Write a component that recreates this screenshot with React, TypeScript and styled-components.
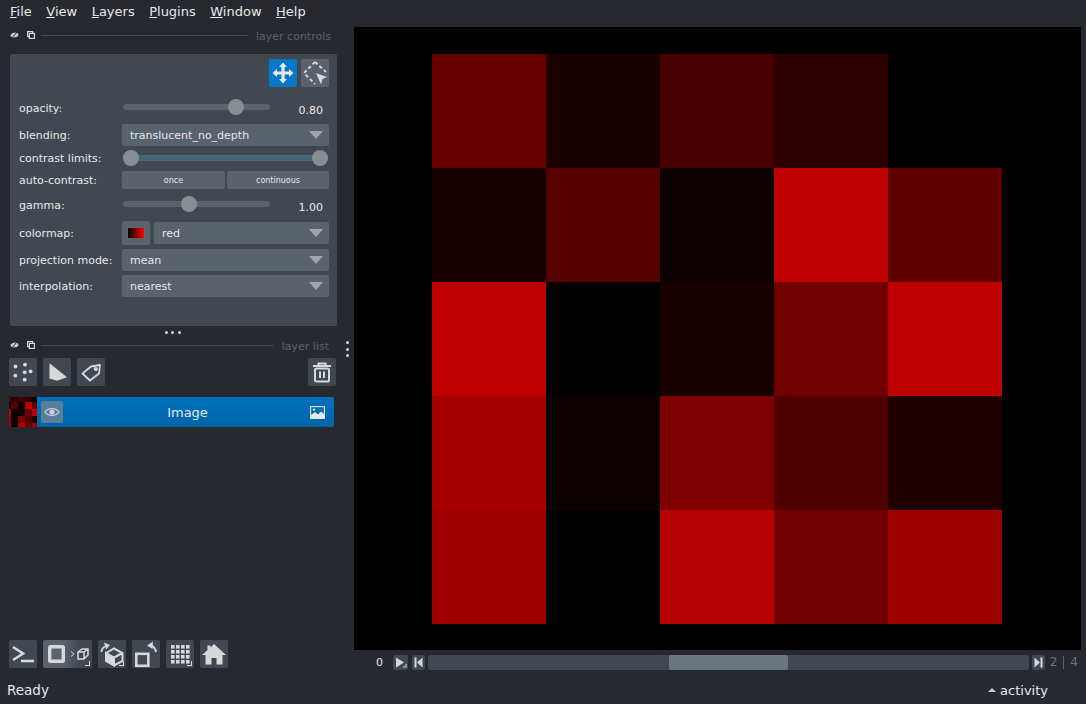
import styled, { createGlobalStyle } from 'styled-components';
import type { ReactNode } from 'react';

const GlobalStyle = createGlobalStyle`
  html, body {
    margin: 0;
    height: 100%;
    background: #262930;
    overflow: hidden;
  }
  #root { height: 100%; }
`;

const Window = styled.div`
  width: 1086px;
  height: 704px;
  display: flex;
  flex-direction: column;
  background: #262930;
  color: #f0f1f2;
  font-family: 'DejaVu Sans', sans-serif;
`;

const MenuBar = styled.div`
  height: 27px;
  flex: none;
  display: flex;
  gap: 14.5px;
  align-items: center;
  padding: 0 0 4px 10px;
  box-sizing: border-box;
  font-size: 13px;
`;

const MenuItem = styled.span`
  color: #e6e8ea;
`;

const Main = styled.div`
  flex: 1;
  display: flex;
  min-height: 0;
`;

const Dock = styled.div`
  width: 354px;
  flex: none;
  display: flex;
  flex-direction: column;
`;

const TitleBar = styled.div<{ $h: number; $pb: number }>`
  height: ${({ $h }) => $h}px;
  display: flex;
  align-items: center;
  gap: 8px;
  padding: 0 0 ${({ $pb }) => $pb}px 10px;
  box-sizing: border-box;
`;

const TitleIcons = styled.div`
  width: 26px;
  display: flex;
  gap: 8px;
  margin-right: -3px;
`;

const TitleLine = styled.div`
  flex: 1;
  height: 1px;
  background: #414851;
`;

const TitleText = styled.span`
  font-size: 11px;
  color: #5a626c;
  padding-top: 2px;
`;

const TitleSpacer = styled.div`
  width: 15px;
  flex: none;
`;

const Panel = styled.div`
  width: 327px;
  height: 272px;
  margin-left: 10px;
  padding: 5px 8px 0 9px;
  box-sizing: border-box;
  background: #414851;
  border-radius: 2px;
  flex: none;
`;

const ModeRow = styled.div`
  display: flex;
  justify-content: flex-end;
  gap: 4px;
  height: 28px;
  margin-bottom: 8px;
`;

const ToolButton = styled.div<{ $active?: boolean }>`
  width: 28px;
  height: 28px;
  flex: none;
  border-radius: 2px;
  display: flex;
  align-items: center;
  justify-content: center;
  background: ${({ $active }) => ($active ? '#0479c8' : '#5a626c')};
`;

const Row = styled.div<{ $h: number; $mt?: number }>`
  height: ${({ $h }) => $h}px;
  margin-top: ${({ $mt }) => $mt ?? 0}px;
  display: grid;
  grid-template-columns: 103px 1fr;
  align-items: center;
`;

const Label = styled.label`
  font-size: 11px;
  color: #e6e8ea;
  white-space: nowrap;
`;

const SliderCell = styled.div`
  display: flex;
  align-items: center;
  height: 100%;
`;

const Track = styled.div`
  position: relative;
  width: 147px;
  height: 6px;
  margin: 0 0 2px 1px;
  border-radius: 3px;
  background: #5a626c;
`;

const Knob = styled.div`
  position: absolute;
  top: -5px;
  width: 16px;
  height: 16px;
  margin-left: -8px;
  border-radius: 50%;
  background: #868e93;
`;

const Value = styled.span`
  width: 53px;
  text-align: right;
  font-size: 11px;
  color: #e6e8ea;
  padding-top: 5px;
`;

const RangeTrack = styled.div`
  position: relative;
  flex: 1;
  height: 6px;
  margin: 0 1px;
  border-radius: 3px;
  background: #41677c;
  border: 1px solid #5a626c;
  box-sizing: border-box;
`;

const RangeKnob = styled(Knob)`
  top: -6px;
`;

const Combo = styled.div`
  flex: 1;
  height: 22px;
  display: flex;
  align-items: center;
  justify-content: space-between;
  padding: 0 6px 0 8px;
  box-sizing: border-box;
  background: #5a626c;
  border-radius: 2px;
  font-size: 11px;
  color: #e6e8ea;
`;

const Caret = styled.div`
  width: 0;
  height: 0;
  border-left: 7px solid transparent;
  border-right: 7px solid transparent;
  border-top: 8px solid #a0a5aa;
`;

const ButtonPair = styled.div`
  display: grid;
  grid-template-columns: 103px 102px;
  gap: 2px;
`;

const SmallButton = styled.div`
  height: 18px;
  display: flex;
  align-items: center;
  justify-content: center;
  background: #5a626c;
  border-radius: 2px;
  font-size: 8px;
  color: #e6e8ea;
`;

const ColormapCell = styled.div`
  display: flex;
  align-items: center;
  gap: 4px;
`;

const Swatch = styled.div`
  width: 28px;
  height: 24px;
  flex: none;
  display: flex;
  align-items: center;
  justify-content: center;
  background: #5a626c;
  border-radius: 2px;
`;

const SwatchBar = styled.div`
  width: 16px;
  height: 10px;
  background: linear-gradient(to right, #000, #f00);
`;

const Handle = styled.div`
  width: 325px;
  height: 12px;
  margin-left: 10px;
  flex: none;
  display: flex;
  align-items: center;
  justify-content: center;
  gap: 3.5px;
`;

const Dot = styled.span`
  width: 3px;
  height: 3px;
  border-radius: 50%;
  background: #d6d8da;
`;

const DotColumn = styled.div`
  display: flex;
  flex-direction: column;
  gap: 3.5px;
  margin: 8px 5px 0 9px;
`;

const LayerTools = styled.div`
  display: flex;
  gap: 6px;
  padding: 0 18px 0 9px;
  margin-top: 6px;
`;

const Push = styled.div`
  flex: 1;
`;

const DarkButton = styled(ToolButton)`
  background: #414851;
`;

const LayerRow = styled.div`
  display: flex;
  width: 325px;
  height: 30px;
  margin: 11px 0 0 9px;
`;

const Thumb = styled.div`
  width: 28px;
  height: 30px;
  flex: none;
  display: grid;
  grid-template-columns: 2px 7px 7px 7px 5px;
  grid-template-rows: 5px 7px 7px 7px 4px;
  background: #000;
`;

const ThumbCell = styled.div<{ $c: string }>`
  background: ${({ $c }) => $c};
`;

const LayerBody = styled.div`
  flex: 1;
  display: flex;
  align-items: center;
  padding: 0 9px 0 4px;
  background: linear-gradient(to bottom, #0072bf, #0064a6);
  border-radius: 0 2px 2px 0;
`;

const EyeBox = styled.div`
  width: 22px;
  height: 22px;
  flex: none;
  display: flex;
  align-items: center;
  justify-content: center;
  background: #5a7d9a;
  border-radius: 2px;
`;

const LayerName = styled.span`
  flex: 1;
  text-align: center;
  font-size: 13px;
  color: #e6e8ea;
  padding-left: 2px;
`;

const BottomTools = styled.div`
  margin-top: auto;
  padding: 0 0 10px 9px;
  display: flex;
  gap: 6px;
`;

const NdButton = styled.div`
  position: relative;
  width: 49px;
  height: 28px;
  flex: none;
  border-radius: 2px;
  background: linear-gradient(to right, #5a626c 40%, #414851 75%);
`;

const ToolWrap = styled.div`
  position: relative;
`;

const CornerMark = styled.div`
  position: absolute;
  right: 2px;
  bottom: 2px;
  width: 4px;
  height: 4px;
  border-right: 1px solid #d6d8da;
  border-bottom: 1px solid #d6d8da;
`;

const ViewerColumn = styled.div`
  flex: 1;
  display: flex;
  flex-direction: column;
  padding-right: 5px;
`;

const Canvas = styled.div`
  height: 623px;
  flex: none;
  background: #000;
  padding: 27px 79px 0 78px;
  box-sizing: border-box;
`;

const Heatmap = styled.div`
  width: 570px;
  height: 570px;
  display: grid;
  grid-template-columns: repeat(5, 1fr);
  grid-template-rows: repeat(5, 1fr);
`;

const Cell = styled.div<{ $c: string }>`
  background: ${({ $c }) => $c};
`;

const Dims = styled.div`
  height: 16px;
  margin-top: 4px;
  display: flex;
  align-items: center;
  font-size: 11px;
`;

const FrameNumber = styled.span`
  width: 39px;
  text-align: right;
  padding-right: 10px;
  box-sizing: border-box;
  color: #e6e8ea;
  flex: none;
`;

const PlayButton = styled.div<{ $w: number; $ml?: number }>`
  position: relative;
  width: ${({ $w }) => $w}px;
  height: 15px;
  flex: none;
  margin-left: ${({ $ml }) => $ml ?? 0}px;
  display: flex;
  align-items: center;
  justify-content: center;
  background: #414851;
  border-radius: 2px;
`;

const ScrollTrack = styled.div`
  flex: 1;
  height: 15px;
  margin: 0 3px;
  display: flex;
  background: #414851;
  border-radius: 2px;
`;

const ScrollSpace = styled.div<{ $w: number }>`
  width: ${({ $w }) => $w}px;
`;

const ScrollThumb = styled.div`
  width: 119px;
  background: #6a7682;
  border-radius: 2px;
`;

const DimCounts = styled.div`
  width: 36px;
  flex: none;
  display: flex;
  align-items: center;
  justify-content: flex-end;
  padding-right: 3px;
  box-sizing: border-box;
  color: #6a737d;
  font-size: 12px;
  gap: 6px;
`;

const CountRule = styled.span`
  width: 1px;
  height: 13px;
  background: #5a626c;
`;

const StatusBar = styled.div`
  height: 26px;
  flex: none;
  display: flex;
  align-items: center;
  justify-content: space-between;
  padding: 0 38px 2px 7px;
  box-sizing: border-box;
  font-size: 13.5px;
  color: #e6e8ea;
`;

const Activity = styled.div`
  display: flex;
  align-items: center;
  gap: 4px;
  font-size: 13px;
`;

const ActivityCaret = styled.div`
  width: 0;
  height: 0;
  border-left: 4px solid transparent;
  border-right: 4px solid transparent;
  border-bottom: 4px solid #c4c8cc;
`;

const ICON = '#d6d8da';

const FloatIcon = () => (
  <svg width="9" height="8" viewBox="0 0 9 8">
    <ellipse cx="4.5" cy="4" rx="4" ry="2.4" fill="#c8cacc" transform="rotate(-12 4.5 4)" />
    <path d="M2 7 L7 1" stroke="#262930" strokeWidth="1" />
  </svg>
);

const CloseIcon = () => (
  <svg width="8" height="8" viewBox="0 0 8 8" fill="none" stroke="#d6d8da" strokeWidth="1.2">
    <rect x="0.6" y="0.6" width="5" height="5" />
    <rect x="2.4" y="2.4" width="5" height="5" fill="#262930" />
  </svg>
);

const Title = ({ label, h, pb, children }: { label: string; h: number; pb: number; children?: ReactNode }) => (
  <TitleBar $h={h} $pb={pb}>
    <TitleIcons>
      <FloatIcon />
      <CloseIcon />
    </TitleIcons>
    <TitleLine />
    <TitleText>{label}</TitleText>
    {children}
  </TitleBar>
);

const MoveIcon = () => (
  <svg width="22" height="22" viewBox="0 0 22 22" fill="#e6e8ea">
    <path d="M11 0.5 L15 5 H12.6 V9.4 H17 V7 L21.5 11 L17 15 V12.6 H12.6 V17 H15 L11 21.5 L7 17 H9.4 V12.6 H5 V15 L0.5 11 L5 7 V9.4 H9.4 V5 H7 Z" />
  </svg>
);

const SelectIcon = () => (
  <svg width="26" height="26" viewBox="0 0 26 26">
    <path d="M13 2 L24 12 M13 2 L2 13 L13 24" fill="none" stroke="#d6d8da" strokeWidth="2" strokeDasharray="3.4 2.6" />
    <path d="M14 13 L25 17 L20.5 19 L19 24.5 Z" fill="#d6d8da" />
  </svg>
);

const PointsIcon = () => (
  <svg width="28" height="28" viewBox="0 0 28 28" fill={ICON}>
    <circle cx="16" cy="6.7" r="1.9" />
    <circle cx="6.5" cy="8.5" r="1.9" />
    <circle cx="21.6" cy="13.3" r="1.9" />
    <circle cx="15.7" cy="14.3" r="1.9" />
    <circle cx="6.3" cy="17.7" r="1.9" />
    <circle cx="15.7" cy="21.7" r="1.9" />
  </svg>
);

const ShapeIcon = () => (
  <svg width="28" height="28" viewBox="0 0 28 28" fill={ICON}>
    <path d="M6.5 5.3 L24 19.3 L14 22.8 L6.5 20.5 Z" />
  </svg>
);

const LabelIcon = () => (
  <svg width="28" height="28" viewBox="0 0 28 28" fill="none" stroke={ICON} strokeWidth="1.8" strokeLinejoin="round">
    <path d="M5.5 15.5 L14 8.5 L23 7 L22 15.5 L13 22.5 Z" />
    <circle cx="18.8" cy="11" r="1.2" />
  </svg>
);

const TrashIcon = () => (
  <svg width="28" height="28" viewBox="0 0 28 28" fill="none" stroke={ICON} strokeWidth="2">
    <path d="M5 8 H23 M10.5 8 V5.5 H17.5 V8" />
    <rect x="7" y="10.5" width="14" height="13" rx="1.5" />
    <path d="M12 13.5 V20 M16 13.5 V20" />
  </svg>
);

const EyeIcon = () => (
  <svg width="16" height="12" viewBox="0 0 16 12">
    <path d="M1 6 C4 1.5 12 1.5 15 6 C12 10.5 4 10.5 1 6 Z" fill="none" stroke="#c8d2da" strokeWidth="1.2" />
    <circle cx="8" cy="6" r="2.6" fill="#c8d2da" />
  </svg>
);

const ImageIcon = () => (
  <svg width="15" height="13" viewBox="0 0 15 13">
    <rect x="0.6" y="0.6" width="13.8" height="11.8" fill="none" stroke="#e6e8ea" strokeWidth="1.1" />
    <path d="M1 12 V9 L5 6 L8 8.5 L11 5.5 L14 8 V12 Z" fill="#e6e8ea" />
    <circle cx="4" cy="3.6" r="1.2" fill="#e6e8ea" />
  </svg>
);

const ConsoleIcon = () => (
  <svg width="28" height="28" viewBox="0 0 28 28" fill="none" stroke={ICON} strokeWidth="2.6">
    <path d="M4 7 L14 13.5 L4 20" />
    <path d="M12 21 H25" />
  </svg>
);

const NdIcon = () => (
  <svg width="49" height="28" viewBox="0 0 49 28" fill="none" stroke={ICON}>
    <rect x="6.7" y="6.7" width="13.6" height="14.6" rx="1" strokeWidth="3.4" />
    <path d="M28 11.5 L31 14 L28 16.5" strokeWidth="1" />
    <path d="M35 12 L39 9 H45 V15 L41 19 H35 Z M35 12 H41 V19 M41 12 L45 9" strokeWidth="1.5" />
  </svg>
);

const RollIcon = () => (
  <svg width="28" height="28" viewBox="0 0 28 28" fill="none" stroke={ICON} strokeWidth="2">
    <path d="M8 13 L16 17.5 V25.5 L8 21 Z" fill={ICON} />
    <path d="M8 13 L16 8.5 L24.5 13 V21 L16 25.5 M16 17.5 L24.5 13" />
    <path d="M3.5 12 C3.5 9.5 5 7.5 7 6.5" strokeWidth="1.8" />
    <path d="M6 2.5 L12 5 L8 9.5 Z" fill={ICON} stroke="none" />
  </svg>
);

const TransposeIcon = () => (
  <svg width="28" height="28" viewBox="0 0 28 28" fill="none" stroke={ICON}>
    <rect x="4.3" y="13.8" width="12" height="12" strokeWidth="2.6" />
    <path d="M19 5 C21.5 6.5 23.5 9 24 12" strokeWidth="2" />
    <path d="M15 5.5 L21 1.5 L20.5 9 Z" fill={ICON} stroke="none" />
  </svg>
);

const GridIcon = () => (
  <svg width="28" height="28" viewBox="0 0 28 28" fill={ICON}>
    {[5, 10, 15, 20].map((y) =>
      [5, 10, 15, 20].map((x) => <rect key={`${x}-${y}`} x={x} y={y} width="3.6" height="3.6" />),
    )}
  </svg>
);

const HomeIcon = () => (
  <svg width="28" height="28" viewBox="0 0 28 28" fill={ICON}>
    <path d="M14 4 L26 15 H22.5 V24.5 H16.5 V18 H11.5 V24.5 H5.5 V15 H2 L7.5 10 V5.5 H10.5 V7.4 Z" />
  </svg>
);

const PlayIcon = () => (
  <svg width="12" height="11" viewBox="0 0 12 11" fill={ICON}>
    <path d="M1 0.5 L9 5.5 L1 10.5 Z" />
    <path d="M11.5 7 V10.5 H8 V9.5 H10.5 V7 Z" />
  </svg>
);

const StepBack = () => (
  <svg width="9" height="11" viewBox="0 0 9 11" fill={ICON}>
    <rect x="0.5" y="0.5" width="2" height="10" />
    <path d="M8.5 0.5 L3 5.5 L8.5 10.5 Z" />
  </svg>
);

const StepForward = () => (
  <svg width="9" height="11" viewBox="0 0 9 11" fill={ICON}>
    <rect x="6.5" y="0.5" width="2" height="10" />
    <path d="M0.5 0.5 L6 5.5 L0.5 10.5 Z" />
  </svg>
);

const shade = (v: number) => `rgb(${v}, 0, 0)`;

const GRID = [
  [104, 28, 72, 44, 0],
  [26, 88, 12, 192, 96],
  [192, 4, 24, 112, 192],
  [168, 12, 128, 80, 32],
  [156, 0, 180, 112, 156],
];

const MENU = [
  ['F', 'ile'],
  ['V', 'iew'],
  ['L', 'ayers'],
  ['P', 'lugins'],
  ['W', 'indow'],
  ['H', 'elp'],
];

export default function App() {
  return (
    <Window>
      <GlobalStyle />
      <MenuBar>
        {MENU.map(([first, rest]) => (
          <MenuItem key={first}>
            <u>{first}</u>
            {rest}
          </MenuItem>
        ))}
      </MenuBar>
      <Main>
        <Dock>
          <Title label="layer controls" h={27} pb={11}>
            <TitleSpacer />
          </Title>
          <Panel>
            <ModeRow>
              <ToolButton $active>
                <MoveIcon />
              </ToolButton>
              <ToolButton>
                <SelectIcon />
              </ToolButton>
            </ModeRow>
            <Row $h={26}>
              <Label>opacity:</Label>
              <SliderCell>
                <Track>
                  <Knob style={{ left: '77%' }} />
                </Track>
                <Value>0.80</Value>
              </SliderCell>
            </Row>
            <Row $h={22} $mt={3}>
              <Label>blending:</Label>
              <Combo>
                translucent_no_depth
                <Caret />
              </Combo>
            </Row>
            <Row $h={22} $mt={1}>
              <Label>contrast limits:</Label>
              <SliderCell>
                <RangeTrack>
                  <RangeKnob style={{ left: 7 }} />
                  <RangeKnob style={{ left: 196 }} />
                </RangeTrack>
              </SliderCell>
            </Row>
            <Row $h={18} $mt={2}>
              <Label>auto-contrast:</Label>
              <ButtonPair>
                <SmallButton>once</SmallButton>
                <SmallButton>continuous</SmallButton>
              </ButtonPair>
            </Row>
            <Row $h={28} $mt={2}>
              <Label>gamma:</Label>
              <SliderCell>
                <Track>
                  <Knob style={{ left: '45%' }} />
                </Track>
                <Value>1.00</Value>
              </SliderCell>
            </Row>
            <Row $h={24} $mt={2}>
              <Label>colormap:</Label>
              <ColormapCell>
                <Swatch>
                  <SwatchBar />
                </Swatch>
                <Combo>
                  red
                  <Caret />
                </Combo>
              </ColormapCell>
            </Row>
            <Row $h={22} $mt={4}>
              <Label>projection mode:</Label>
              <Combo>
                mean
                <Caret />
              </Combo>
            </Row>
            <Row $h={22} $mt={4}>
              <Label>interpolation:</Label>
              <Combo>
                nearest
                <Caret />
              </Combo>
            </Row>
          </Panel>
          <Handle>
            <Dot />
            <Dot />
            <Dot />
          </Handle>
          <Title label="layer list" h={14} pb={0}>
            <DotColumn>
              <Dot />
              <Dot />
              <Dot />
            </DotColumn>
          </Title>
          <LayerTools>
            <DarkButton>
              <PointsIcon />
            </DarkButton>
            <DarkButton>
              <ShapeIcon />
            </DarkButton>
            <DarkButton>
              <LabelIcon />
            </DarkButton>
            <Push />
            <DarkButton>
              <TrashIcon />
            </DarkButton>
          </LayerTools>
          <LayerRow>
            <Thumb>
              {GRID.flat().map((v, i) => (
                <ThumbCell key={i} $c={shade(v)} />
              ))}
            </Thumb>
            <LayerBody>
              <EyeBox>
                <EyeIcon />
              </EyeBox>
              <LayerName>Image</LayerName>
              <ImageIcon />
            </LayerBody>
          </LayerRow>
          <BottomTools>
            <DarkButton>
              <ConsoleIcon />
            </DarkButton>
            <NdButton>
              <NdIcon />
              <CornerMark />
            </NdButton>
            <ToolWrap>
              <DarkButton>
                <RollIcon />
              </DarkButton>
              <CornerMark />
            </ToolWrap>
            <DarkButton>
              <TransposeIcon />
            </DarkButton>
            <ToolWrap>
              <DarkButton>
                <GridIcon />
              </DarkButton>
              <CornerMark />
            </ToolWrap>
            <DarkButton>
              <HomeIcon />
            </DarkButton>
          </BottomTools>
        </Dock>
        <ViewerColumn>
          <Canvas>
            <Heatmap>
              {GRID.flat().map((v, i) => (
                <Cell key={i} $c={shade(v)} />
              ))}
            </Heatmap>
          </Canvas>
          <Dims>
            <FrameNumber>0</FrameNumber>
            <PlayButton $w={15}>
              <PlayIcon />
            </PlayButton>
            <PlayButton $w={13} $ml={4}>
              <StepBack />
            </PlayButton>
            <ScrollTrack>
              <ScrollSpace $w={241} />
              <ScrollThumb />
            </ScrollTrack>
            <PlayButton $w={13}>
              <StepForward />
            </PlayButton>
            <DimCounts>
              2
              <CountRule />
              4
            </DimCounts>
          </Dims>
        </ViewerColumn>
      </Main>
      <StatusBar>
        <span>Ready</span>
        <Activity>
          <ActivityCaret />
          activity
        </Activity>
      </StatusBar>
    </Window>
  );
}
